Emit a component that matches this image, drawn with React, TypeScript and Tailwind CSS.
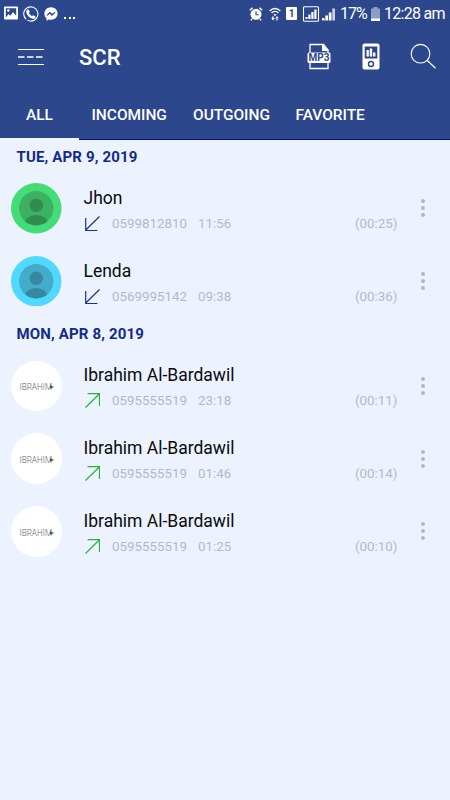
import React from "react";

type Call = {
  name: string;
  number: string;
  time: string;
  duration: string;
  kind: "in" | "out";
  avatar: "green" | "blue" | "logo";
};

const days: { label: string; calls: Call[] }[] = [
  {
    label: "TUE, APR 9, 2019",
    calls: [
      { name: "Jhon", number: "0599812810", time: "11:56", duration: "(00:25)", kind: "in", avatar: "green" },
      { name: "Lenda", number: "0569995142", time: "09:38", duration: "(00:36)", kind: "in", avatar: "blue" },
    ],
  },
  {
    label: "MON, APR 8, 2019",
    calls: [
      { name: "Ibrahim Al-Bardawil", number: "0595555519", time: "23:18", duration: "(00:11)", kind: "out", avatar: "logo" },
      { name: "Ibrahim Al-Bardawil", number: "0595555519", time: "01:46", duration: "(00:14)", kind: "out", avatar: "logo" },
      { name: "Ibrahim Al-Bardawil", number: "0595555519", time: "01:25", duration: "(00:10)", kind: "out", avatar: "logo" },
    ],
  },
];

function StatusBar() {
  return (
    <div className="flex h-7 items-center text-white">
      <svg className="ml-1 mt-[-2px] h-[14px] w-[14px] shrink-0" viewBox="0 0 14 14">
        <path fill="#fff" fillRule="evenodd" d="M1 0.500h12a1 1 0 0 1 1 1v11a1 1 0 0 1-1 1H1a1 1 0 0 1-1-1V1.500a1 1 0 0 1 1-1zm.8 1.800v9.200l2.700-3.600 1.700 1.800 2.900-3.800 3.100 3.900V2.300z" />
        <circle cx="4.300" cy="4.500" r="1.200" fill="#fff" />
      </svg>
      <svg className="ml-[5px] mt-[-1px] h-4 w-4 shrink-0" viewBox="0 0 16 16">
        <path d="M3.200 13.400A7.100 7.100 0 1 1 8 15.100" fill="none" stroke="#fff" strokeWidth="1.100" />
        <path d="M2.200 12.500 1.500 10M4.500 14.300l3.500.9" fill="none" stroke="#fff" strokeWidth="1" />
        <path fill="#fff" d="M5.300 3.200 6.800 5.800 5.900 7c.6 1.400 1.700 2.500 3.100 3.100l1.200-.9 2.600 1.500c-.4 1.500-1.600 2.300-3 2C6.500 12 3.900 9.400 3.300 6.200c-.2-1.400.6-2.600 2-3z" />
      </svg>
      <svg className="ml-[5px] mt-[-1px] h-[14px] w-[14px] shrink-0" viewBox="0 0 14 14">
        <path fill="#fff" d="M7 .3C3.200.3.400 3.100.400 6.700c0 1.900.8 3.500 2.100 4.600v2.400l2.300-1.200c.7.200 1.400.3 2.200.3 3.800 0 6.600-2.700 6.600-6.200S10.800.3 7 .3z" />
        <path d="m2.900 8.300 3-3.100 2.200 2 3-2-3 3.300-2.200-2z" fill="#2c478c" stroke="#2c478c" strokeWidth=".9" />
      </svg>
      <div className="ml-[6px] mt-2 flex w-[11px] justify-between">
        <i className="h-[2px] w-[2px] bg-white" />
        <i className="h-[2px] w-[2px] bg-white" />
        <i className="h-[2px] w-[2px] bg-white" />
      </div>
      <svg className="ml-[174px] h-[14px] w-[14px] shrink-0" viewBox="0 0 14 14">
        <circle cx="7" cy="7.300" r="5.500" fill="#fff" />
        <path d="M.8 3.200 3.600.8M13.200 3.200 10.400.8M3 12 1.800 13.400M11 12l1.200 1.400" stroke="#fff" strokeWidth="1.400" />
        <path d="M7 4.300v3.400h2.800" fill="none" stroke="#2c478c" strokeWidth="1.100" />
      </svg>
      <svg className="ml-[6px] h-[14px] w-3 shrink-0" viewBox="0 0 12 14">
        <path d="M.7 4C3.800.6 8.200.6 11.300 4M2.600 6c2-2.200 4.800-2.200 6.800 0" fill="none" stroke="#fff" strokeWidth="1.400" />
        <path d="M4.300 7.200h3.400L6 9.300z" fill="#fff" />
        <path d="M2.200 11h3.600L4 13.500zM6.200 11.500h3.600L8 9zM3.400 9.300h1.200v2H3.400zM7.400 11h1.200v2.500H7.400z" fill="#fff" />
      </svg>
      <span className="ml-[5px] mt-[-1px] flex h-[13px] w-[11px] items-center justify-center rounded-[1px] bg-white text-[10px] font-bold leading-none text-[#2c478c]">1</span>
      <svg className="ml-[6px] mt-[-1px] h-4 w-[35px] shrink-0" viewBox="0 0 35 16">
        <rect x=".5" y=".8" width="15" height="14.400" rx="1" fill="none" stroke="#fff" strokeWidth="1.100" />
        <path d="M2.500 13v-2h2v2zM5.300 13V8.500h2.200V13zM8.300 13V6h2.200v7zM11.300 13V3.500h2.200V13z" fill="#fff" />
        <path d="M19 14.500V12h2.500v2.500zM22.300 14.500V9.500H25v5zM25.800 14.500V6.500h2.700v8z" fill="#fff" />
        <path d="M29.300 14.500V2.500h2.700v12z" fill="#fff" opacity=".75" />
      </svg>
      <span className="ml-[2px] w-[27px] whitespace-nowrap text-[16px] leading-none tracking-[-1px]">17%</span>
      <svg className="ml-[4px] mt-[-1px] h-[14px] w-[9px] shrink-0" viewBox="0 0 9 14">
        <path d="M2.500 0h4v1.500H9V14H0V1.500h2.500z" fill="#8f9dc4" />
        <path d="M0 11.500h9V14H0z" fill="#fff" />
      </svg>
      <span className="ml-[4px] whitespace-nowrap text-[16px] leading-none tracking-[-0.700px]">12:28 am</span>
    </div>
  );
}

function Toolbar() {
  return (
    <div className="flex h-[60px] items-center text-white">
      <svg className="ml-[18px] mt-[-2px] h-[18px] w-[26px] shrink-0" viewBox="0 0 26 18">
        <path d="M0 1.500h26M0 16.500h26" stroke="#fff" strokeWidth="1" />
        <path d="M0 9h6.500M9 9h6.500M18 9h6.500" stroke="#fff" strokeWidth="1.500" />
      </svg>
      <h1 className="ml-[35px] w-[42px] text-[22px] font-medium leading-none">SCR</h1>
      <svg className="ml-[186px] mt-[-3px] h-[27px] w-6 shrink-0" viewBox="0 0 24 27">
        <path d="M3 10V1.500h13.500L21 7v3M3 19v6.500h18V19" fill="none" stroke="#fff" strokeWidth="1.300" />
        <path d="M15 1v7h7z" fill="#fff" />
        <rect x=".5" y="9.500" width="23" height="10.500" rx="1.500" fill="#fff" />
        <text x="12" y="18.400" textAnchor="middle" fontSize="10" fontWeight="700" fill="#2c478c">MP3</text>
      </svg>
      <svg className="ml-[31px] mt-[-3px] h-[27px] w-[18px] shrink-0" viewBox="0 0 18 27">
        <rect x=".5" y=".5" width="17" height="26" rx="2" fill="#fff" />
        <rect x="2.700" y="3.500" width="12.600" height="12" fill="#2c478c" />
        <path d="M4.500 13.500V7h2.300v6.500zM7.700 13.500V5.500h2.500v8zM11 13.500V9.500h2.400v4z" fill="#fff" />
        <circle cx="9" cy="21" r="2.500" fill="none" stroke="#2c478c" strokeWidth="1.400" />
      </svg>
      <svg className="ml-[30px] mt-[-3px] h-[27px] w-[27px] shrink-0" viewBox="0 0 27 27">
        <circle cx="10.500" cy="10.700" r="9.300" fill="none" stroke="#fff" strokeWidth="1.100" />
        <path d="m17 17.200 8.500 8" stroke="#fff" strokeWidth="1.200" />
      </svg>
    </div>
  );
}

function Tabs() {
  return (
    <nav className="flex h-[52px] border-b border-[#04126f] text-[15.450px] font-medium leading-[55px] text-white">
      <div className="flex h-[52px] w-[79px] shrink-0 justify-center border-b-2 border-[#f4f6fd]">ALL</div>
      <div className="ml-[12.500px] w-[101.500px] whitespace-nowrap">INCOMING</div>
      <div className="w-[102.500px] whitespace-nowrap">OUTGOING</div>
      <div className="whitespace-nowrap">FAVORITE</div>
    </nav>
  );
}

function Avatar({ kind }: { kind: Call["avatar"] }) {
  if (kind === "logo") {
    return (
      <div className="flex h-[50.500px] w-[50.500px] shrink-0 items-center justify-center rounded-full bg-white">
        <span className="ml-[1px] mt-[3px] flex items-center text-[8.200px] font-light leading-none text-[#666]">
          IBRAHIM
          <svg className="ml-[-2px] h-[4px] w-[4px]" viewBox="0 0 5 5">
            <path d="M0 0 5 2.500 0 5z" fill="#555" />
          </svg>
        </span>
      </div>
    );
  }
  const [outer, inner, person] =
    kind === "green" ? ["#44dc77", "#3cb163", "#308c4f"] : ["#51d8ff", "#43acca", "#35889f"];
  return (
    <svg className="h-[50.500px] w-[50.500px] shrink-0" viewBox="0 0 50 50">
      <clipPath id={"disc-" + kind}>
        <circle cx="25" cy="25" r="17" />
      </clipPath>
      <circle cx="25" cy="25" r="25" fill={outer} />
      <circle cx="25" cy="25" r="17" fill={inner} />
      <g clipPath={"url(#disc-" + kind + ")"} fill={person}>
        <circle cx="25" cy="22" r="6.600" />
        <ellipse cx="25" cy="41" rx="11.700" ry="9.300" />
      </g>
    </svg>
  );
}

function CallRow({ call }: { call: Call }) {
  return (
    <div className="flex h-[72.750px] items-center">
      <div className="ml-[11px] flex">
        <Avatar kind={call.avatar} />
      </div>
      <div className="ml-[22px] w-[314px] pt-[4px]">
        <div className="mt-px h-[23px] whitespace-nowrap text-[17.500px] leading-[23px] text-[#0a0a0a]">{call.name}</div>
        <div className="mt-[3px] flex h-[22px] items-center text-[13.350px] text-[#b5b9c6]">
          <svg className="ml-[1px] mt-[-1px] h-[15px] w-[15px] shrink-0" viewBox="0 0 15 15">
            {call.kind === "in" ? (
              <path d="M14.500.5.500 14.300M.7 2v12.500H12.500" fill="none" stroke="#1b3390" strokeWidth="1.200" />
            ) : (
              <path d="M.5 14.500 14.500.7M2.500.7h12V13" fill="none" stroke="#27b33b" strokeWidth="1.200" />
            )}
          </svg>
          <span className="ml-[12.500px] w-[86px]">{call.number}</span>
          <span>{call.time}</span>
          <span className="ml-auto">{call.duration}</span>
        </div>
      </div>
      <div className="ml-[23.500px] flex flex-col gap-[3px]">
        <i className="h-1 w-1 rounded-full bg-[#b4b8c6]" />
        <i className="h-1 w-1 rounded-full bg-[#b4b8c6]" />
        <i className="h-1 w-1 rounded-full bg-[#b4b8c6]" />
      </div>
    </div>
  );
}

export default function App() {
  return (
    <div className="h-[800px] w-[450px] overflow-hidden bg-[#ecf3ff] font-[Roboto,sans-serif]">
      <header className="h-[140px] bg-[#2c478c]">
        <StatusBar />
        <Toolbar />
        <Tabs />
      </header>
      <main>
        {days.map((day) => (
          <section key={day.label}>
            <h2 className="h-8 pl-[16.500px] pt-[0.500px] text-[15px] font-bold leading-8 tracking-[0.150px] text-[#132a87]">{day.label}</h2>
            {day.calls.map((call) => (
              <CallRow key={call.time} call={call} />
            ))}
          </section>
        ))}
      </main>
    </div>
  );
}
